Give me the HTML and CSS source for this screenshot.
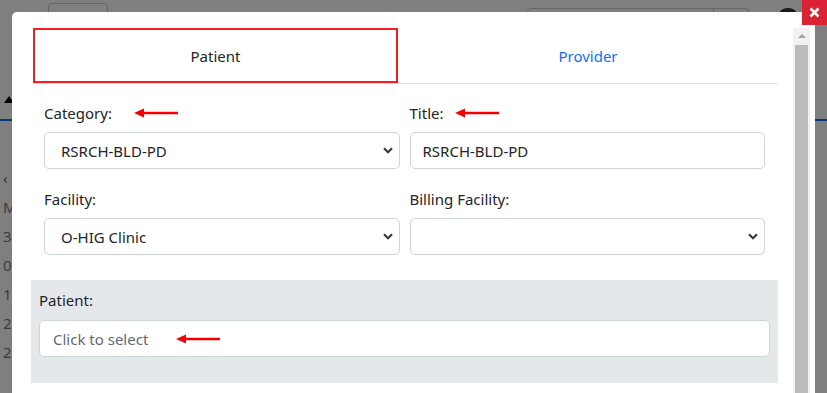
FILE: index.html
```html
<!DOCTYPE html>
<html lang="en">
<head>
    <meta charset="UTF-8">
    <meta name="viewport" content="width=device-width, initial-scale=1.0">
    <title>Appointment</title>
    <link rel="stylesheet" href="styles.css">
</head>
<body>

    <!-- Page behind the modal -->
    <div class="page">
        <div class="topbar">
            <div class="top-btn"></div>
            <div class="search">
                <div class="search-input"></div>
                <div class="search-btn"></div>
            </div>
            <div class="avatar"></div>
        </div>
        <div class="nav">
            <span class="caret"></span>
        </div>
        <div class="list">
            <span>&lsaquo;</span>
            <span>M</span>
            <span>3</span>
            <span>0</span>
            <span>1</span>
            <span>2</span>
            <span>2</span>
        </div>
    </div>

    <div class="backdrop"></div>

    <!-- Modal -->
    <div class="modal">
        <div class="modal-body">
            <div class="tabs">
                <div class="tab active">Patient</div>
                <div class="tab">Provider</div>
            </div>

            <div class="row">
                <div class="field">
                    <label>Category: <svg class="arrow arrow-wide" width="44" height="10" viewBox="0 0 44 10"><line x1="8" y1="5" x2="44" y2="5" stroke="#f50000" stroke-width="2.4"/><polygon points="0,5 10,0.5 10,9.5" fill="#f50000"/></svg></label>
                    <div class="select">
                        <span>RSRCH-BLD-PD</span>
                        <svg width="10" height="7" viewBox="0 0 10 7"><path d="M1 1.2 L5 5.2 L9 1.2" fill="none" stroke="#343a40" stroke-width="2.2"/></svg>
                    </div>
                </div>
                <div class="field">
                    <label>Title: <svg class="arrow" width="44" height="10" viewBox="0 0 44 10"><line x1="8" y1="5" x2="44" y2="5" stroke="#f50000" stroke-width="2.4"/><polygon points="0,5 10,0.5 10,9.5" fill="#f50000"/></svg></label>
                    <div class="input">RSRCH-BLD-PD</div>
                </div>
            </div>

            <div class="row">
                <div class="field">
                    <label>Facility:</label>
                    <div class="select">
                        <span>O-HIG Clinic</span>
                        <svg width="10" height="7" viewBox="0 0 10 7"><path d="M1 1.2 L5 5.2 L9 1.2" fill="none" stroke="#343a40" stroke-width="2.2"/></svg>
                    </div>
                </div>
                <div class="field">
                    <label>Billing Facility:</label>
                    <div class="select">
                        <span></span>
                        <svg width="10" height="7" viewBox="0 0 10 7"><path d="M1 1.2 L5 5.2 L9 1.2" fill="none" stroke="#343a40" stroke-width="2.2"/></svg>
                    </div>
                </div>
            </div>

            <div class="patient-box">
                <label>Patient:</label>
                <div class="input placeholder">Click to select <svg class="arrow arrow-far" width="44" height="10" viewBox="0 0 44 10"><line x1="8" y1="5" x2="44" y2="5" stroke="#f50000" stroke-width="2.4"/><polygon points="0,5 10,0.5 10,9.5" fill="#f50000"/></svg></div>
            </div>
        </div>

        <div class="scrollbar">
            <div class="scroll-up"></div>
            <div class="scroll-thumb"></div>
        </div>
    </div>

    <div class="close-btn">
        <svg width="11" height="11" viewBox="0 0 11 11"><path d="M1.5 1.5 L9.5 9.5 M9.5 1.5 L1.5 9.5" stroke="white" stroke-width="2.6"/></svg>
    </div>

</body>
</html>
```

FILE: styles.css
```css
body {
    margin: 0;
    font-family: 'Noto Sans', 'Open Sans', sans-serif;
    color: #212529;
    overflow: hidden;
}

/* Page behind */
.page {
    width: 827px;
    height: 393px;
    background: #fff;
}
.topbar {
    display: flex;
    align-items: flex-start;
    height: 40px;
    padding-top: 3px;
}
.top-btn {
    width: 58px;
    height: 30px;
    margin-left: 48px;
    border: 1px solid #ccc;
    border-radius: 4px;
}
.search {
    display: flex;
    margin-left: 419px;
    margin-top: 5px;
}
.search-input {
    width: 185px;
    height: 30px;
    border: 1px solid #ccc;
    border-radius: 4px 0 0 4px;
}
.search-btn {
    width: 34px;
    height: 30px;
    border: 1px solid #ccc;
    border-left: none;
    border-radius: 0 4px 4px 0;
}
.avatar {
    width: 22px;
    height: 22px;
    margin-left: 28px;
    margin-top: 5px;
    border-radius: 50%;
    background: #333;
}
.nav {
    height: 78px;
    border-bottom: 2px solid #0d6efd;
    box-sizing: border-box;
}
.caret {
    display: inline-block;
    margin-left: 4px;
    margin-top: 53px;
    width: 0;
    height: 0;
    border-left: 5px solid transparent;
    border-right: 5px solid transparent;
    border-bottom: 7px solid #000;
}
.list {
    display: flex;
    flex-direction: column;
    padding-left: 3px;
    padding-top: 47px;
    font-size: 15px;
    color: #777;
}
.list span {
    height: 29px;
}

.backdrop {
    position: fixed;
    inset: 0;
    background: rgba(0, 0, 0, 0.5);
}

/* Modal */
.modal {
    position: fixed;
    top: 12px;
    left: 12px;
    width: 803px;
    bottom: -20px;
    background: #fff;
    border-radius: 5px;
    display: flex;
}
.modal-body {
    width: 745px;
    padding: 16px 0 0 21px;
}
.tabs {
    display: flex;
    border-bottom: 1px solid #dee2e6;
}
.tab {
    flex: 1;
    height: 55px;
    display: flex;
    align-items: center;
    justify-content: center;
    font-size: 15px;
    color: #0d6efd;
}
.tab.active {
    flex: 0 0 365px;
    color: #212529;
    border: 2px solid #f51d1d;
    box-sizing: border-box;
}

.row {
    display: flex;
    gap: 10px;
    padding: 0 13px 0 11px;
    margin-top: 18px;
}
.row + .row {
    margin-top: 19px;
}
.field {
    flex: 1;
}
label {
    display: flex;
    align-items: center;
    height: 22px;
    font-size: 15px;
    margin-bottom: 8px;
}
.arrow {
    margin-left: 12px;
}
.arrow-wide {
    margin-left: 22px;
}
.arrow-far {
    margin-left: 28px;
}
.select, .input {
    height: 37px;
    flex-shrink: 0;
    box-sizing: border-box;
    border: 1px solid #ced4da;
    border-radius: 5px;
    background: #fff;
    display: flex;
    align-items: center;
    justify-content: space-between;
    padding: 0 6px 0 16px;
    font-size: 15px;
}
.input {
    justify-content: flex-start;
    padding-left: 12px;
}

.patient-box {
    margin: 25px 0 0 -2px;
    background: #e5e8eb;
    padding: 9px 8px 26px 8px;
}
.patient-box label {
    margin-bottom: 9px;
}
.patient-box .input {
    padding-left: 13px;
}
.placeholder {
    color: #5f6a75;
}

/* Fake scrollbar */
.scrollbar {
    width: 17px;
    margin: 16px 0 0 15px;
    background: #f1f1f1;
    display: flex;
    flex-direction: column;
    align-items: center;
}
.scroll-up {
    width: 0;
    height: 0;
    margin-top: 6px;
    border-left: 4px solid transparent;
    border-right: 4px solid transparent;
    border-bottom: 4px solid #a3a3a3;
}
.scroll-thumb {
    width: 13px;
    flex: 1;
    margin-top: 7px;
    background: #bcbcbc;
}

.close-btn {
    position: fixed;
    top: 0;
    right: 0;
    width: 25px;
    height: 25px;
    background: #dc2335;
    display: flex;
    align-items: center;
    justify-content: center;
}
```
